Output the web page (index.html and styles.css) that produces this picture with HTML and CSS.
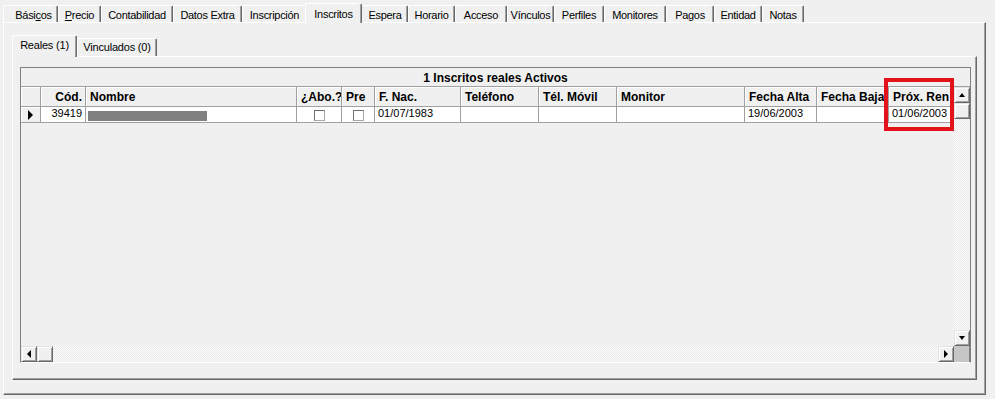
FILE: index.html
```html
<!DOCTYPE html>
<html lang="es">
<head>
<meta charset="utf-8">
<title>Inscritos</title>
<link rel="stylesheet" href="styles.css">
</head>
<body>
<div class="window">
  <div class="tabs">
    <div class="tab t-basicos">Bási<u>c</u>os</div>
    <div class="tab t-precio"><u>P</u>recio</div>
    <div class="tab t-conta">Contabilidad</div>
    <div class="tab t-datos">Datos Extra</div>
    <div class="tab t-inscrip">Inscripción</div>
    <div class="tab t-inscritos active">Inscritos</div>
    <div class="tab t-espera">Espera</div>
    <div class="tab t-horario">Horario</div>
    <div class="tab t-acceso">Acceso</div>
    <div class="tab t-vinc">Vínculos</div>
    <div class="tab t-perfiles">Perfiles</div>
    <div class="tab t-monitores">Monitores</div>
    <div class="tab t-pagos">Pagos</div>
    <div class="tab t-entidad">Entidad</div>
    <div class="tab t-notas">Notas</div>
  </div>
  <div class="panel">
    <div class="subtabs">
      <div class="stab s-reales active">Reales (1)</div>
      <div class="stab s-vinc">Vinculados (0)</div>
    </div>
    <div class="subpanel">
      <div class="grid">
        <div class="grid-title">1 Inscritos reales Activos</div>
        <div class="grid-main">
          <div class="cols">
            <div class="row head">
              <div class="hc"></div>
              <div class="hc right">Cód.</div>
              <div class="hc">Nombre</div>
              <div class="hc">¿Abo.?</div>
              <div class="hc">Pre</div>
              <div class="hc">F. Nac.</div>
              <div class="hc">Teléfono</div>
              <div class="hc">Tél. Móvil</div>
              <div class="hc">Monitor</div>
              <div class="hc">Fecha Alta</div>
              <div class="hc">Fecha Baja</div>
              <div class="hc">Próx. Ren</div>
            </div>
            <div class="row data">
              <div class="ind"><span class="ptr"></span></div>
              <div class="dc right">39419</div>
              <div class="dc"><span class="redact"></span></div>
              <div class="dc center"><span class="chk"></span></div>
              <div class="dc center"><span class="chk"></span></div>
              <div class="dc">01/07/1983</div>
              <div class="dc"></div>
              <div class="dc"></div>
              <div class="dc"></div>
              <div class="dc">19/06/2003</div>
              <div class="dc"></div>
              <div class="dc">01/06/2003</div>
            </div>
          </div>
          <div class="vscroll">
            <div class="sbtn"><span class="arr up"></span></div>
            <div class="sbtn thumb"></div>
            <div class="track"></div>
            <div class="sbtn"><span class="arr down"></span></div>
          </div>
        </div>
        <div class="hscroll">
          <div class="sbtn"><span class="arr left"></span></div>
          <div class="sbtn thumb"></div>
          <div class="track"></div>
          <div class="sbtn"><span class="arr right"></span></div>
          <div class="corner"></div>
        </div>
      </div>
    </div>
  </div>
  <div class="mark"></div>
</div>
</body>
</html>
```

FILE: styles.css
```css
* { box-sizing: border-box; }

html, body {
  margin: 0;
  background: #f0f0f0;
}

body {
  width: 995px;
  height: 399px;
  overflow: hidden;
  font: 11px/13px "Liberation Sans", Arial, sans-serif;
  color: #000;
}

.window {
  position: relative;
  padding: 3px 0 0 3px;
}

/* ---------- outer tabs ---------- */
.tabs {
  display: flex;
  align-items: flex-end;
  height: 19px;
}

.tab {
  height: 17px;
  padding-top: 3px;
  text-align: center;
  white-space: nowrap;
  letter-spacing: -0.3px;
  background: #f0f0f0;
  border-top: 1px solid #fff;
  border-left: 1px solid #fff;
  border-right: 1px solid #696969;
  border-radius: 2px 2px 0 0;
  box-shadow: inset -1px 0 #a0a0a0;
}

.tab u { text-decoration: underline; text-underline-offset: 1px; }

.tab.active {
  height: 20px;
  padding-top: 4px;
  margin: 0 -2px -1px;
  position: relative;
  z-index: 1;
}

.t-basicos { width: 55px; padding-left: 6px; }
.t-precio { width: 43px; }
.t-conta { width: 72px; }
.t-datos { width: 69px; }
.t-inscrip { width: 65px; }
.t-inscritos { width: 57px; }
.t-espera { width: 48px; padding-left: 2px; }
.t-horario { width: 47px; }
.t-acceso { width: 52px; }
.t-vinc { width: 47px; }
.t-perfiles { width: 50px; }
.t-monitores { width: 62px; }
.t-pagos { width: 48px; }
.t-entidad { width: 48px; }
.t-notas { width: 42px; }

/* ---------- outer panel ---------- */
.panel {
  width: 983px;
  height: 373px;
  padding: 12px 8px 0 8px;
  border: 1px solid;
  border-color: #fff #696969 #696969 #fff;
  box-shadow: inset -1px -1px #a0a0a0;
}

/* ---------- sub tabs ---------- */
.subtabs {
  display: flex;
  align-items: flex-end;
  height: 21px;
}

.stab {
  height: 18px;
  padding-top: 2px;
  text-align: center;
  white-space: nowrap;
  letter-spacing: -0.2px;
  background: #f0f0f0;
  border-top: 1px solid #fff;
  border-left: 1px solid #fff;
  border-right: 1px solid #696969;
  border-radius: 2px 2px 0 0;
  box-shadow: inset -1px 0 #a0a0a0;
}

.stab.active {
  height: 22px;
  padding-top: 3px;
  margin-bottom: -1px;
  position: relative;
  z-index: 1;
}

.s-reales { width: 65px; }
.s-vinc { width: 80px; }

.subpanel {
  width: 965px;
  height: 324px;
  padding: 10px 5px 16px 7px;
  border: 1px solid;
  border-color: #fff #696969 #696969 #fff;
  box-shadow: inset -1px -1px #a0a0a0;
}

/* ---------- grid ---------- */
.grid {
  width: 951px;
  height: 296px;
  display: flex;
  flex-direction: column;
  border: 1px solid #808080;
  border-bottom-color: #fff;
}

.grid-title {
  height: 19px;
  padding: 3px 0 0;
  text-align: center;
  font: bold 12px/14px "Liberation Sans", Arial, sans-serif;
  border-bottom: 1px solid #a0a0a0;
}

.grid-main {
  display: flex;
  height: 259px;
}

.cols {
  width: 933px;
  overflow: hidden;
}

.row {
  display: grid;
  grid-template-columns: 20px 45px 211px 45px 33px 86px 78px 78px 128px 72px 72px 72px;
  width: 940px;
}

.hc {
  height: 20px;
  padding: 3px 4px 0;
  font: bold 12px/14px "Liberation Sans", Arial, sans-serif;
  white-space: nowrap;
  overflow: hidden;
  background: #f0f0f0;
  border-right: 1px solid #a0a0a0;
  border-bottom: 1px solid #a0a0a0;
  box-shadow: inset 1px 1px #fff;
}

.hc.right { text-align: right; padding-right: 3px; }

.ind {
  height: 16px;
  display: flex;
  align-items: center;
  justify-content: center;
  background: #f0f0f0;
  border-right: 1px solid #a0a0a0;
  border-bottom: 1px solid #a0a0a0;
  box-shadow: inset 1px 1px #fff;
}

.ptr {
  width: 0;
  height: 0;
  border-left: 5px solid #000;
  border-top: 5px solid transparent;
  border-bottom: 5px solid transparent;
  margin-left: -1px;
}

.dc {
  height: 16px;
  padding: 0 3px;
  background: #fff;
  white-space: nowrap;
  overflow: hidden;
  border-right: 1px solid #a0a0a0;
  border-bottom: 1px solid #a0a0a0;
}

.dc.right { text-align: right; }
.dc.center { display: flex; justify-content: center; padding-top: 3px; }

.redact {
  display: block;
  width: 119px;
  height: 10px;
  margin: 4px 0 0 -1px;
  background: #808080;
}

.chk {
  display: block;
  width: 11px;
  height: 11px;
  background: #fff;
  border: 1px solid;
  border-color: #6e6e6e #a8a8a8 #a8a8a8 #6e6e6e;
}

/* ---------- scrollbars ---------- */
.vscroll {
  width: 16px;
  display: flex;
  flex-direction: column;
}

.hscroll {
  height: 16px;
  display: flex;
}

.track {
  flex: 1;
  background-color: #fff;
  background-image: repeating-conic-gradient(#e6e6e6 0 25%, #fff 0 50%);
  background-size: 2px 2px;
}

.sbtn {
  width: 16px;
  height: 16px;
  flex: none;
  display: flex;
  align-items: center;
  justify-content: center;
  background: #f0f0f0;
  border: 1px solid;
  border-color: #e3e3e3 #696969 #696969 #e3e3e3;
  box-shadow: inset 1px 1px #fff, inset -1px -1px #a0a0a0;
}

.arr { width: 0; height: 0; }
.arr.up { border-left: 3px solid transparent; border-right: 3px solid transparent; border-bottom: 4px solid #000; }
.arr.down { border-left: 3px solid transparent; border-right: 3px solid transparent; border-top: 4px solid #000; }
.arr.left { border-top: 4px solid transparent; border-bottom: 4px solid transparent; border-right: 4px solid #000; }
.arr.right { border-top: 4px solid transparent; border-bottom: 4px solid transparent; border-left: 4px solid #000; }

.corner {
  width: 16px;
  height: 16px;
  background: #c6c6c6;
  border-right: 1px solid #808080;
}

/* ---------- annotation ---------- */
.mark {
  position: absolute;
  left: 884px;
  top: 78px;
  width: 70px;
  height: 53px;
  border: 4px solid #e3121b;
}
```
